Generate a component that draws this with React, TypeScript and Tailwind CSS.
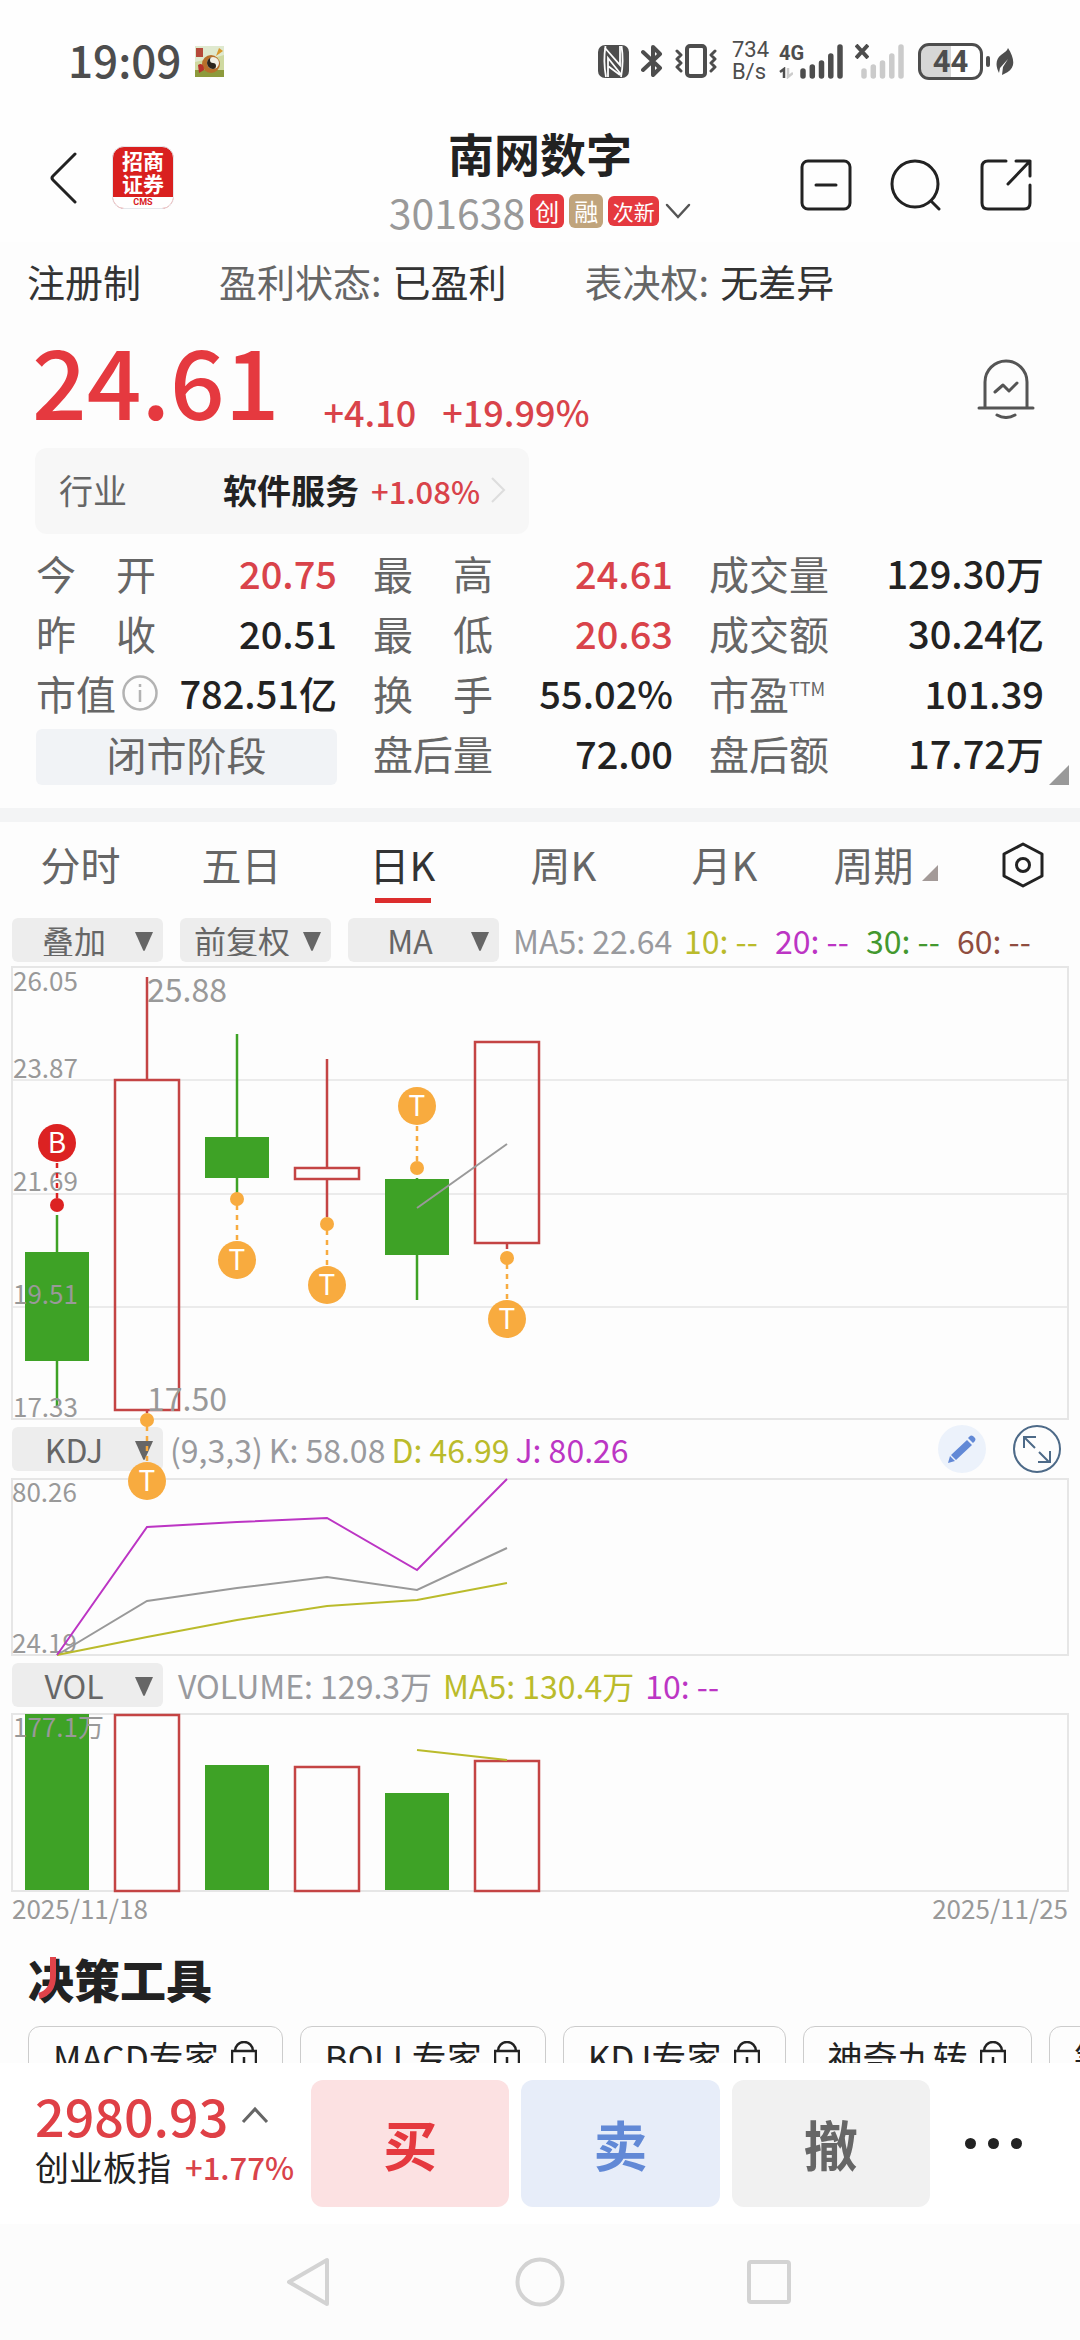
import React from "react";

const GREEN = "#3ea226";
const ORANGE = "#f8ab3f";
const OUTLINE = "#c44444";

/* ---------- status bar ---------- */

function Signal({ color }: { color: string }) {
  return (
    <svg viewBox="0 0 43 35" className="h-[35px] w-[43px]" fill="none" stroke={color} strokeWidth="5.5" strokeLinecap="round">
      <path d="M3 27v5M12.3 23v9M21.5 19v13M30.8 12v20M40 3v29" />
    </svg>
  );
}

function StatusBar() {
  return (
    <div className="flex h-[120px] shrink-0 items-center pt-[2px] pr-[66px] pl-[68px] text-[#4d4d4d]">
      <span className="pb-[4px] text-[44px] leading-none font-medium">19:09</span>
      <svg viewBox="0 0 29 31" className="ml-[14px] h-[31px] w-[29px]">
        <rect width="29" height="31" rx="2" fill="#cfd9a0" />
        <path d="M0 0h29v9L18 12 0 16z" fill="#dfe9cf" />
        <path d="M0 24h29v7H0z" fill="#8d9a3c" />
        <rect x="1" y="2" width="7" height="9" fill="#b5493a" />
        <path d="M24 2l4 3-7 5z" fill="#d99a2e" />
        <circle cx="16" cy="18" r="9" fill="#b8702b" />
        <path d="M3 19c4-3 6 1 6 5l-5 3z" fill="#b8322b" />
        <circle cx="18" cy="17" r="6" fill="#f2efe4" />
        <path d="M18 11a6 6 0 1 0 0 12 3 3 0 0 0 0-6 3 3 0 0 1 0-6z" fill="#2b241c" />
      </svg>
      <div className="ml-auto flex items-center">
        <svg viewBox="0 0 31 33" className="h-[33px] w-[31px]" fill="none" stroke="#fefefe" strokeWidth="1.8">
          <rect width="31" height="33" rx="7" fill="#4d4d4d" stroke="none" />
          <path d="M7.500 1Q5 16 8 32M23.500 1Q26 16 23 32" />
          <path d="M7 3l15 17V1M23.500 30L10 13v19M10 21l12 9" />
        </svg>
        <svg viewBox="0 0 22 34" className="ml-[12px] h-[34px] w-[22px]" fill="none" stroke="#4d4d4d" strokeWidth="4" strokeLinejoin="round" strokeLinecap="round">
          <path d="M2 8l17 16-7 7V3l7 7L2 26" />
        </svg>
        <svg viewBox="0 0 42 34" className="ml-[12px] h-[34px] w-[42px]" fill="none" stroke="#4d4d4d" strokeWidth="4" strokeLinejoin="round" strokeLinecap="round">
          <rect x="12" y="2" width="18" height="30" rx="3" />
          <path d="M2 7l4 4-4 4 4 4-4 4 4 4M40 7l-4 4 4 4-4 4 4 4-4 4" strokeWidth="3" />
        </svg>
        <div className="ml-[15px] flex flex-col font-[Roboto,sans-serif] text-[22px] leading-[22px]">
          <span>734</span>
          <span>B/s</span>
        </div>
        <div className="relative ml-[18px] h-[35px] w-[56px]">
          <div className="absolute right-0 bottom-0">
            <Signal color="#4d4d4d" />
          </div>
          <span className="absolute -top-px -left-2 font-[Roboto,sans-serif] text-[20px] leading-[20px] font-bold">4G</span>
          <svg viewBox="0 0 14 12" className="absolute bottom-0 -left-2 h-[12px] w-[14px]" fill="none">
            <path d="M1 5l4-3v9" stroke="#4d4d4d" strokeWidth="2.5" />
            <path d="M9 1v9l5-4" stroke="#ccc" strokeWidth="2.5" />
          </svg>
        </div>
        <div className="relative ml-[18px] h-[35px] w-[43px]">
          <Signal color="#cbcbcb" />
          <svg viewBox="0 0 14 15" className="absolute top-0 -left-[6px] h-[15px] w-[14px]" stroke="#4d4d4d" strokeWidth="4">
            <path d="M1 1l12 13M13 1L1 14" />
          </svg>
        </div>
        <div className="ml-[14px] flex h-[37px] w-[65px] items-center justify-center rounded-[11px] border-[3px] border-[#4d4d4d] bg-linear-to-r from-[#d6d6d6] from-50% to-white to-50% font-[Roboto,sans-serif] text-[31px] leading-none font-bold">
          44
        </div>
        <div className="ml-[3px] h-[11px] w-[4px] rounded-sm bg-[#4d4d4d]" />
        <svg viewBox="0 0 18 29" className="ml-[6px] h-[29px] w-[18px]">
          <path d="M12 1c4 6 6 12 5 17-1 4-4 7-9 9L6 28l1-8 5-8-8 9-1 5C-1 18 0 12 5 8c4-3 6-4 7-7z" fill="#4d4d4d" />
        </svg>
      </div>
    </div>
  );
}

/* ---------- header ---------- */

function Header() {
  return (
    <header className="grid h-[122px] shrink-0 grid-cols-[1fr_auto_1fr] items-center">
      <div className="flex items-center pl-[50px]">
        <button aria-label="返回" className="mt-[-6px]">
          <svg viewBox="0 0 28 52" className="h-[52px] w-[28px]" fill="none" stroke="#222" strokeWidth="3" strokeLinecap="round" strokeLinejoin="round">
            <path d="M25 2L3 24q-2 2 0 4l22 22" />
          </svg>
        </button>
        <div className="mt-[-7px] ml-[34px] flex h-[63px] w-[62px] flex-col items-center overflow-hidden rounded-xl border border-gray-200 bg-[#d9201f] font-bold text-white">
          <span className="mt-[2px] text-[21px] leading-[23px]">招商</span>
          <span className="text-[21px] leading-[23px]">证券</span>
          <span className="mt-auto w-full bg-white text-center font-[Roboto,sans-serif] text-[9px] leading-[11px] text-[#d9201f]">CMS</span>
        </div>
      </div>
      <div className="flex flex-col items-center">
        <h1 className="text-[46px] leading-[60px] font-bold text-[#222]">南网数字</h1>
        <div className="flex h-[58px] items-center text-white">
          <span className="text-[41px] leading-none text-[#999]">301638</span>
          <span className="ml-[5px] flex h-[34px] w-[34px] items-center justify-center rounded-md bg-[#e5393f] text-[24px] leading-none">创</span>
          <span className="ml-[5px] flex h-[34px] w-[34px] items-center justify-center rounded-md bg-[#c0a47c] text-[24px] leading-none">融</span>
          <span className="ml-[5px] flex h-[30px] w-[51px] items-center justify-center rounded-md bg-[#e5393f] text-[21px] leading-none">次新</span>
          <button aria-label="更多标签" className="ml-[6px]">
            <svg viewBox="0 0 26 16" className="h-[16px] w-[26px]" fill="none" stroke="#555" strokeWidth="2.5" strokeLinecap="round">
              <path d="M2 2l11 12L24 2" />
            </svg>
          </button>
        </div>
      </div>
      <div className="flex items-center justify-end gap-[38px] pt-[7px] pr-[48px]">
        <button aria-label="移除自选">
          <svg viewBox="0 0 52 52" className="h-[52px] w-[52px]" fill="none" stroke="#222" strokeWidth="3" strokeLinecap="round">
            <rect x="2" y="2" width="48" height="48" rx="6" />
            <path d="M16 26h20" />
          </svg>
        </button>
        <button aria-label="搜索">
          <svg viewBox="0 0 52 52" className="h-[52px] w-[52px]" fill="none" stroke="#222" strokeWidth="3" strokeLinecap="round">
            <circle cx="25" cy="25" r="23" />
            <path d="M41 42l8 8" />
          </svg>
        </button>
        <button aria-label="分享">
          <svg viewBox="0 0 52 52" className="h-[52px] w-[52px]" fill="none" stroke="#222" strokeWidth="3" strokeLinecap="round" strokeLinejoin="round">
            <path d="M26 2H8q-6 0-6 6v36q0 6 6 6h36q6 0 6-6V26M36 2h14v15M50 2L28 25" />
          </svg>
        </button>
      </div>
    </header>
  );
}

/* ---------- quote ---------- */

const label = "text-[#666]";

function SpreadLabel({ text }: { text: string }) {
  return (
    <span className="flex w-[120px] justify-between text-[#666]">
      {text.split("").map((c) => (
        <span key={c}>{c}</span>
      ))}
    </span>
  );
}

function Stat({ name, value, red }: { name: React.ReactNode; value: string; red?: boolean }) {
  return (
    <div className="flex items-center justify-between pb-1">
      {name}
      <span className={red ? "text-[38px] font-medium text-[#d9434a]" : "text-[38px] font-medium text-[#222]"}>{value}</span>
    </div>
  );
}

function Quote() {
  return (
    <section className="relative">
      <div className="flex h-[82px] items-center px-[27px] pb-1 text-[38px] leading-none text-[#333]">
        <span>注册制</span>
        <span className="ml-[78px] text-[#666]">盈利状态:</span>
        <span className="ml-[11px]">已盈利</span>
        <span className="ml-[78px] text-[#666]">表决权:</span>
        <span className="ml-[11px]">无差异</span>
      </div>
      <div className="flex h-[124px] items-end px-[32px] pb-[19px]">
        <span className="text-[96px] leading-[100px] font-medium text-[#e5393f]">24.61</span>
        <span className="ml-[44px] text-[36px] leading-none font-medium text-[#d9434a]">+4.10</span>
        <span className="ml-[26px] text-[36px] leading-none font-medium text-[#d9434a]">+19.99%</span>
        <button aria-label="预警" className="mr-[13px] mb-[10px] ml-auto">
          <svg viewBox="0 0 58 60" className="h-[60px] w-[58px]" fill="none" stroke="#555" strokeWidth="3" strokeLinecap="round" strokeLinejoin="round">
            <path d="M2 49h54M8 49V23a21 21 0 0 1 42 0v26M20 56q9 5 18 0M18 33l8-7 6 6 8-8" />
          </svg>
        </button>
      </div>
      <button className="ml-[35px] flex h-[86px] w-[494px] items-center rounded-xl bg-[#f7f7f7] pb-[2px] pl-[24px] text-left text-[34px] leading-none">
        <span className={label}>行业</span>
        <span className="ml-[96px] font-bold text-[#222]">软件服务</span>
        <span className="ml-[12px] text-[31px] font-medium text-[#d9434a]">+1.08%</span>
        <svg viewBox="0 0 16 26" className="ml-[10px] h-[26px] w-[16px]" fill="none" stroke="#ddd" strokeWidth="2">
          <path d="M2 1l12 12L2 25" />
        </svg>
      </button>
      <div className="mt-[11px] grid auto-rows-[60px] grid-cols-[301fr_300fr_335fr] gap-x-9 px-9 text-[40px] leading-none">
        <Stat name={<SpreadLabel text="今开" />} value="20.75" red />
        <Stat name={<SpreadLabel text="最高" />} value="24.61" red />
        <Stat name={<span className={label}>成交量</span>} value="129.30万" />
        <Stat name={<SpreadLabel text="昨收" />} value="20.51" />
        <Stat name={<SpreadLabel text="最低" />} value="20.63" red />
        <Stat name={<span className={label}>成交额</span>} value="30.24亿" />
        <Stat
          name={
            <span className="flex items-center text-[#666]">
              市值
              <svg viewBox="0 0 36 36" className="ml-[6px] h-9 w-9" fill="none" stroke="#b3b3b3" strokeWidth="2.5">
                <circle cx="18" cy="18" r="16.5" />
                <path d="M18 15v12M18 9v3" />
              </svg>
            </span>
          }
          value="782.51亿"
        />
        <Stat name={<SpreadLabel text="换手" />} value="55.02%" />
        <Stat
          name={
            <span className="flex text-[#666]">
              市盈<span className="text-[18px] leading-[30px]">TTM</span>
            </span>
          }
          value="101.39"
        />
        <div className="flex h-[56px] items-center justify-center self-end rounded-md bg-[#f1f3f6] pb-[6px] text-[#666]">闭市阶段</div>
        <Stat name={<span className={label}>盘后量</span>} value="72.00" />
        <Stat name={<span className={label}>盘后额</span>} value="17.72万" />
      </div>
      <button aria-label="展开" className="absolute right-[11px] bottom-0">
        <svg viewBox="0 0 20 20" className="h-5 w-5">
          <path d="M20 0v20H0z" fill="#999" />
        </svg>
      </button>
    </section>
  );
}

/* ---------- tabs ---------- */

function Tabs() {
  const tabs = ["分时", "五日", "日K", "周K", "月K", "周期"];
  return (
    <nav className="flex h-[90px] items-stretch text-[40px] leading-none text-[#666]">
      {tabs.map((t) => (
        <button key={t} className="relative flex flex-1 items-center justify-center pb-[6px]">
          <span className={t === "日K" ? "text-[#333]" : ""}>{t}</span>
          {t === "周期" && (
            <svg viewBox="0 0 16 16" className="mt-[18px] ml-[8px] h-4 w-4">
              <path d="M16 0v16H0z" fill="#a39a98" />
            </svg>
          )}
          {t === "日K" && <span className="absolute bottom-[9px] h-[5px] w-[56px] bg-[#dc2d2d]" />}
        </button>
      ))}
      <button aria-label="图表设置" className="flex w-[114px] items-center justify-center pb-[4px]">
        <svg viewBox="0 0 42 46" className="h-[46px] w-[42px]" fill="none" stroke="#222" strokeWidth="3" strokeLinejoin="round">
          <path d="M21 2l19 10v22L21 44 2 34V12z" />
          <circle cx="21" cy="23" r="6.5" />
        </svg>
      </button>
    </nav>
  );
}

function Picker({ value }: { value: string }) {
  return (
    <div className="relative w-[151px]">
      <select
        aria-label={value}
        className="h-11 w-full appearance-none rounded-md bg-[#ededed] pr-[27px] text-center text-[32px] leading-none text-[#666]"
        defaultValue={value}
      >
        <option>{value}</option>
      </select>
      <svg viewBox="0 0 18 20" className="pointer-events-none absolute top-[14px] right-[10px] h-5 w-[18px]">
        <path d="M0 0h18L10 18q-1 2-2 0z" fill="#666" />
      </svg>
    </div>
  );
}

/* ---------- charts ---------- */

function Frame({ h }: { h: number }) {
  return <rect x="0" y="0" width="1056" height={h} fill="none" stroke="#e6e6e6" strokeWidth="2" />;
}

function Marker({ x, y, dotY, letter, color = ORANGE }: { x: number; y: number; dotY: number; letter: string; color?: string }) {
  return (
    <g>
      <path d={`M${x} ${y}V${dotY}`} stroke={color} strokeWidth="2.5" strokeDasharray="5 5" />
      <circle cx={x} cy={dotY} r="7" fill={color} />
      <circle cx={x} cy={y} r="19" fill={color} />
      <text x={x} y={y + 10} textAnchor="middle" fontSize="28" fill="#fff">
        {letter}
      </text>
    </g>
  );
}

const candles = [
  { x: 45, top: 285, bottom: 394, high: 248, low: 439, up: false },
  { x: 135, top: 113, bottom: 443, high: 10, low: 446, up: true },
  { x: 225, top: 170, bottom: 211, high: 67, low: 226, up: false },
  { x: 315, top: 201, bottom: 212, high: 92, low: 250, up: true },
  { x: 405, top: 212, bottom: 288, high: 211, low: 333, up: false },
  { x: 495, top: 75, bottom: 276, high: 75, low: 282, up: true },
];

function CandleChart() {
  return (
    <svg viewBox="0 0 1056 452" className="relative z-10 block h-auto w-full overflow-visible" role="img" aria-label="日K线图">
      <path d="M0 113h1056M0 227h1056M0 340h1056" stroke="#d9d9d9" strokeWidth="1" />
      <Frame h={452} />
      {candles.map((c) =>
        c.up ? (
          <g key={c.x} fill="none" stroke={OUTLINE} strokeWidth="2.5">
            <path d={`M${c.x} ${c.high}V${c.top}M${c.x} ${c.bottom}V${c.low}`} />
            <rect x={c.x - 32} y={c.top} width="64" height={c.bottom - c.top} />
          </g>
        ) : (
          <g key={c.x} fill={GREEN} stroke={GREEN}>
            <path d={`M${c.x} ${c.high}V${c.low}`} strokeWidth="2.5" />
            <rect x={c.x - 32} y={c.top} width="64" height={c.bottom - c.top} stroke="none" />
          </g>
        )
      )}
      <g fill="#999" fontSize="26">
        <text x="1" y="24">26.05</text>
        <text x="1" y="111">23.87</text>
        <text x="1" y="224">21.69</text>
        <text x="1" y="337">19.51</text>
        <text x="1" y="450">17.33</text>
      </g>
      <g fill="#999" fontSize="32">
        <text x="135" y="35">25.88</text>
        <text x="135" y="444">17.50</text>
      </g>
      <path d="M405 241l90-64" stroke="#999" strokeWidth="2" />
      <Marker x={45} y={176} dotY={238} letter="B" color="#dc2222" />
      <Marker x={135} y={514} dotY={453} letter="T" />
      <Marker x={225} y={293} dotY={232} letter="T" />
      <Marker x={315} y={318} dotY={257} letter="T" />
      <Marker x={405} y={139} dotY={201} letter="T" />
      <Marker x={495} y={352} dotY={291} letter="T" />
    </svg>
  );
}

function KdjChart() {
  return (
    <svg viewBox="0 0 1056 176" className="block h-auto w-full overflow-visible" role="img" aria-label="KDJ指标图">
      <Frame h={176} />
      <g fill="#999" fontSize="26">
        <text x="0" y="23">80.26</text>
        <text x="0" y="174">24.19</text>
      </g>
      <g fill="none" strokeWidth="2">
        <path d="M45 176L135 122 225 109 315 98 405 111 495 69" stroke="#999" />
        <path d="M45 176L135 158 225 141 315 127 405 121 495 104" stroke="#babb2b" />
        <path d="M45 176L135 48 225 43 315 39 405 91 495 0" stroke="#bc35c4" />
      </g>
    </svg>
  );
}

const volumes = [
  { x: 45, top: 0, up: false },
  { x: 135, top: 1, up: true },
  { x: 225, top: 51, up: false },
  { x: 315, top: 53, up: true },
  { x: 405, top: 79, up: false },
  { x: 495, top: 47, up: true },
];

function VolumeChart() {
  return (
    <svg viewBox="0 0 1056 177" className="block h-auto w-full overflow-visible" role="img" aria-label="成交量图">
      <Frame h={177} />
      {volumes.map((v) => (
        <rect
          key={v.x}
          x={v.x - 32}
          y={v.top}
          width="64"
          height={(v.up ? 177 : 176) - v.top}
          fill={v.up ? "none" : GREEN}
          stroke={v.up ? OUTLINE : "none"}
          strokeWidth="2.5"
        />
      ))}
      <path d="M405 36l90 10" stroke="#babb2b" strokeWidth="2" />
      <text x="1" y="23" fill="#999" fontSize="26">
        177.1万
      </text>
    </svg>
  );
}

function Charts() {
  return (
    <section className="px-3">
      <div className="flex h-[55px] items-center text-[32px] leading-none whitespace-nowrap">
        <div className="flex gap-[17px]">
          <Picker value="叠加" />
          <Picker value="前复权" />
          <Picker value="MA" />
        </div>
        <div className="ml-[14px] flex text-[#999a9e]">
          <span className="w-[171px]">MA5: 22.64</span>
          <span className="w-[91px] text-[#babb2b]">10: --</span>
          <span className="w-[91px] text-[#bc35c4]">20: --</span>
          <span className="w-[91px] text-[#43982f]">30: --</span>
          <span className="text-[#8f4d40]">60: --</span>
        </div>
      </div>
      <CandleChart />
      <div className="flex h-[60px] items-center text-[32px] leading-none whitespace-nowrap text-[#999a9e]">
        <Picker value="KDJ" />
        <div className="ml-[7px] flex gap-[6px]">
          <span>(9,3,3)</span>
          <span>K: 58.08</span>
          <span className="text-[#babb2b]">D: 46.99</span>
          <span className="text-[#bc35c4]">J: 80.26</span>
        </div>
        <button aria-label="编辑指标" className="ml-auto flex h-12 w-12 items-center justify-center rounded-full bg-[#ecf2fb]">
          <svg viewBox="0 0 28 28" className="h-7 w-7" fill="#6289d6">
            <path d="M0 28l2-7 5 5zM3 20L19 5l5 5L8 25zM20 3l2-2q1-1 3 0l2 2q1 1 0 3l-2 2z" />
          </svg>
        </button>
        <button aria-label="全屏" className="mr-[7px] ml-[27px]">
          <svg viewBox="0 0 48 48" className="h-12 w-12" fill="none" stroke="#4d6a88" strokeWidth="2">
            <circle cx="24" cy="24" r="23" />
            <path d="M22 23L11 12M11 23V12h12M26 27l10 10M25 37h12V26" />
          </svg>
        </button>
      </div>
      <KdjChart />
      <div className="flex h-[59px] items-center text-[32px] leading-none whitespace-nowrap text-[#999a9e]">
        <Picker value="VOL" />
        <div className="ml-[15px] flex gap-[11px]">
          <span>VOLUME: 129.3万</span>
          <span className="text-[#babb2b]">MA5: 130.4万</span>
          <span className="text-[#bc35c4]">10: --</span>
        </div>
      </div>
      <VolumeChart />
      <div className="flex h-[33px] items-center justify-between text-[26px] leading-none text-[#999]">
        <span>2025/11/18</span>
        <span>2025/11/25</span>
      </div>
    </section>
  );
}

/* ---------- tools ---------- */

function Tools() {
  const tools = ["MACD专家", "BOLL专家", "KDJ专家", "神奇九转", "筹码分布"];
  return (
    <section className="pt-[29px] pl-[28px]">
      <h2 className="relative text-[46px] leading-[50px] font-black text-[#222]">
        决策工具
        <svg viewBox="0 0 24 46" className="absolute top-[3px] left-[9px] h-[46px] w-6" fill="none" stroke="#e0434a" strokeWidth="6">
          <path d="M16 1v19q0 16-14 20" />
        </svg>
      </h2>
      <div className="mt-[23px] flex gap-[17px] overflow-hidden pb-10">
        {tools.map((t) => (
          <button key={t} className="flex h-[66px] shrink-0 items-center rounded-xl border border-[#ccc] pr-[25px] pb-[6px] pl-[24px] text-[35px] leading-none whitespace-nowrap text-[#222]">
            {t}
            <svg viewBox="0 0 26 30" className="ml-[12px] h-[30px] w-[26px]" fill="none" stroke="#222" strokeWidth="2.5">
              <path d="M1 10h24v18H1zM4 10a9 9 0 0 1 18 0M13 16v6" />
            </svg>
          </button>
        ))}
      </div>
    </section>
  );
}

/* ---------- bottom ---------- */

function TradeBar() {
  return (
    <div className="flex h-[161px] shrink-0 items-center bg-white pr-[45px] pl-[35px]">
      <div className="w-[276px] shrink-0 pb-[10px] whitespace-nowrap">
        <div className="flex items-center">
          <span className="text-[52px] leading-[56px] font-medium text-[#df4046]">2980.93</span>
          <svg viewBox="0 0 28 18" className="ml-[13px] h-[18px] w-[28px]" fill="none" stroke="#666" strokeWidth="3">
            <path d="M2 16L14 3l12 13" />
          </svg>
        </div>
        <div className="flex items-center leading-[48px]">
          <span className="text-[34px] text-[#222]">创业板指</span>
          <span className="ml-[14px] text-[31px] font-medium text-[#d9434a]">+1.77%</span>
        </div>
      </div>
      <div className="flex flex-1 gap-3 text-[54px] leading-none font-bold">
        <button className="h-[127px] flex-1 rounded-xl bg-[#fce1e2] text-[#e5393f]">买</button>
        <button className="h-[127px] flex-1 rounded-xl bg-[#e7edf9] text-[#6289d6]">卖</button>
        <button className="h-[127px] flex-1 rounded-xl bg-[#f1f1f1] text-[#666]">撤</button>
      </div>
      <button aria-label="更多" className="ml-[22px] flex w-[83px] items-center justify-center gap-[12px]">
        <span className="h-[11px] w-[11px] rounded-full bg-[#222]" />
        <span className="h-[11px] w-[11px] rounded-full bg-[#222]" />
        <span className="h-[11px] w-[11px] rounded-full bg-[#222]" />
      </button>
    </div>
  );
}

function NavBar() {
  return (
    <div className="flex h-[116px] shrink-0 items-center justify-center gap-[182px] bg-[#fcfcfc]">
      <button aria-label="后退">
        <svg viewBox="0 0 50 50" className="h-[50px] w-[50px]" fill="none" stroke="#d3d3d3" strokeWidth="4" strokeLinejoin="round">
          <path d="M44 3v44L6 25z" />
        </svg>
      </button>
      <button aria-label="主页">
        <svg viewBox="0 0 50 50" className="h-[50px] w-[50px]" fill="none" stroke="#d3d3d3" strokeWidth="4">
          <circle cx="25" cy="25" r="22.5" />
        </svg>
      </button>
      <button aria-label="最近任务">
        <svg viewBox="0 0 50 50" className="h-[50px] w-[50px]" fill="none" stroke="#d3d3d3" strokeWidth="4">
          <rect x="2" y="5" width="40" height="40" rx="2" />
        </svg>
      </button>
    </div>
  );
}

export default function App() {
  return (
    <div className="flex h-screen flex-col bg-[#fefefe] font-['Noto_Sans_CJK_SC',sans-serif]">
      <StatusBar />
      <Header />
      <main className="min-h-0 flex-1 overflow-x-hidden overflow-y-auto bg-[#fdfdfd] [scrollbar-width:none]">
        <Quote />
        <div className="mt-[23px] h-[14px] bg-[#f3f4f5]" />
        <Tabs />
        <Charts />
        <Tools />
      </main>
      <TradeBar />
      <NavBar />
    </div>
  );
}
